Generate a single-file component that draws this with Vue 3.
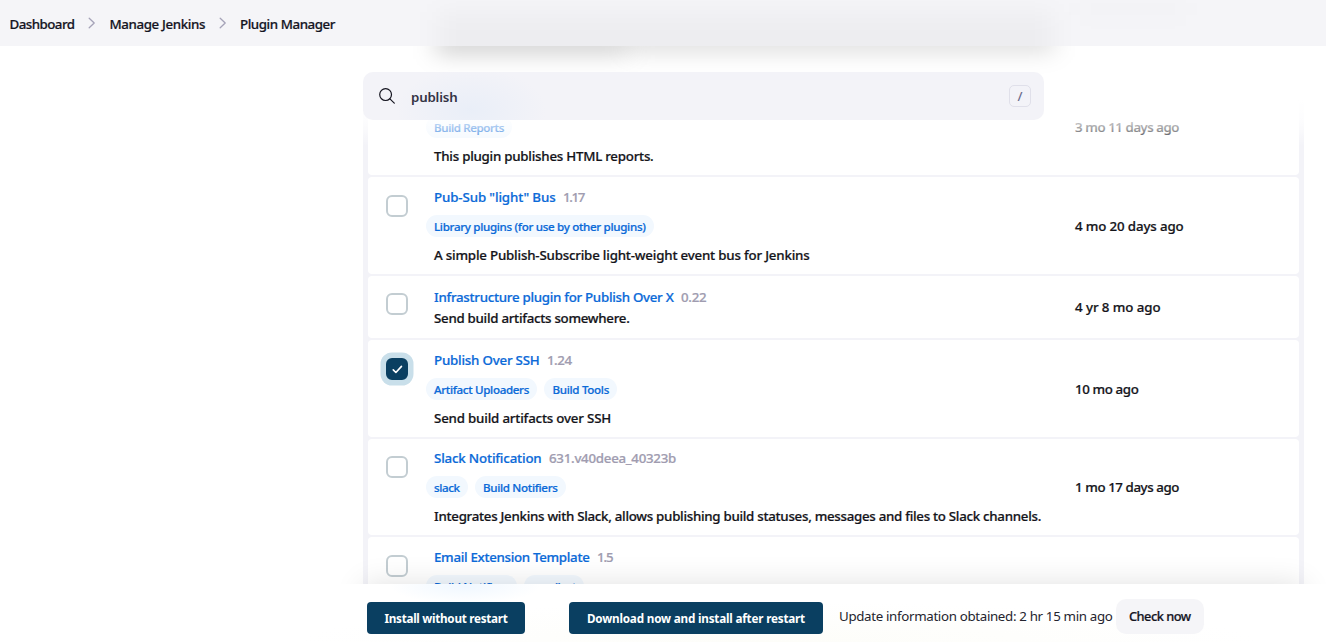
<script setup>
import { ref } from 'vue'

// Tracks a label so that it fills the given width in pixels.
const vFit = {
  mounted(el, { value }) {
    const natural = el.getBoundingClientRect().width
    const n = el.textContent.length
    el.style.letterSpacing = ((value - natural) / n).toFixed(3) + 'px'
  },
}

const crumbs = [
  { text: 'Dashboard', w: 65 },
  { text: 'Manage Jenkins', w: 95.5 },
  { text: 'Plugin Manager', w: 95 },
]

const plugins = ref([
  {
    name: 'Pub-Sub "light" Bus', nw: 121.5, version: '1.17', vw: 21,
    tags: [{ text: 'Library plugins (for use by other plugins)', w: 211.5 }],
    desc: 'A simple Publish-Subscribe light-weight event bus for Jenkins', dw: 375.5,
    date: '4 mo 20 days ago', aw: 108.5, checked: false, kind: 'regular',
  },
  {
    name: 'Infrastructure plugin for Publish Over X', nw: 239.5, version: '0.22', vw: 25.5,
    tags: [],
    desc: 'Send build artifacts somewhere.', dw: 195.5,
    date: '4 yr 8 mo ago', aw: 85.5, checked: false, kind: 'compact',
  },
  {
    name: 'Publish Over SSH', nw: 105.5, version: '1.24', vw: 24.5,
    tags: [{ text: 'Artifact Uploaders', w: 95 }, { text: 'Build Tools', w: 56.5 }],
    desc: 'Send build artifacts over SSH', dw: 177,
    date: '10 mo ago', aw: 63.5, checked: true, kind: 'regular',
  },
  {
    name: 'Slack Notification', nw: 107.5, version: '631.v40deea_40323b', vw: 127,
    tags: [{ text: 'slack', w: 25.5 }, { text: 'Build Notifiers', w: 74.5 }],
    desc: 'Integrates Jenkins with Slack, allows publishing build statuses, messages and files to Slack channels.', dw: 607,
    date: '1 mo 17 days ago', aw: 104, checked: false, kind: 'tight',
  },
  {
    name: 'Email Extension Template', nw: 155.5, version: '1.5', vw: 15.5,
    tags: [{ text: 'Build Notifiers', w: 74.5 }, { text: 'emailext', w: 44 }],
    desc: '', dw: 0, date: '', aw: 0, checked: false, kind: 'regular',
  },
])
</script>

<template>
  <div class="page">
    <header class="crumbs">
      <i class="ghost g1"></i><i class="ghost g4"></i>
      <template v-for="(c, i) in crumbs" :key="c.text">
        <svg v-if="i" class="chev" viewBox="0 0 8 12"><path d="M1.2 1.2 6.2 6 1.2 10.8" /></svg>
        <a class="crumb"><span v-fit="c.w" class="t">{{ c.text }}</span></a>
      </template>
    </header>

    <main class="main">
      <div class="ghosts">
        <i class="ghost g2"></i><i class="ghost g3"></i>
      </div>

      <div class="search">
        <svg class="glass" viewBox="0 0 16 16"><circle cx="6.6" cy="6.6" r="5.9" /><path d="m10.9 10.9 4.4 4.2" /></svg>
        <span v-fit="46.5" class="t query">publish</span>
        <kbd class="key">/</kbd>
      </div>

      <section class="table">
        <div class="row first">
          <div class="check"></div>
          <div class="info">
            <div class="tags"><span class="tag"><span v-fit="70" class="t">Build Reports</span></span></div>
            <div class="desc"><span v-fit="219.5" class="t">This plugin publishes HTML reports.</span></div>
          </div>
          <div class="date"><span v-fit="104" class="t">3 mo 11 days ago</span></div>
        </div>

        <div v-for="p in plugins" :key="p.name" class="row" :class="p.kind">
          <div class="check">
            <span class="box" :class="{ on: p.checked }">
              <svg v-if="p.checked" class="tick" viewBox="0 0 12 10"><path d="M1.3 5.4 4.2 8.3 10.4 1.5" /></svg>
            </span>
          </div>
          <div class="info">
            <div class="title">
              <a v-fit="p.nw" class="t name">{{ p.name }}</a>
              <span v-fit="p.vw" class="t version">{{ p.version }}</span>
            </div>
            <div v-if="p.tags.length" class="tags">
              <span v-for="g in p.tags" :key="g.text" class="tag"><span v-fit="g.w" class="t">{{ g.text }}</span></span>
            </div>
            <div v-if="p.desc" class="desc"><span v-fit="p.dw" class="t">{{ p.desc }}</span></div>
          </div>
          <div class="date"><span v-if="p.date" v-fit="p.aw" class="t">{{ p.date }}</span></div>
        </div>
        <div class="fade"></div>
      </section>
    </main>

    <div class="shade"></div>
    <footer class="bar">
      <button class="btn primary one"><span v-fit="123" class="t">Install without restart</span></button>
      <button class="btn primary two"><span v-fit="218" class="t">Download now and install after restart</span></button>
      <span class="updated"><span v-fit="273.5" class="t">Update information obtained: 2 hr 15 min ago</span></span>
      <button class="btn again"><span v-fit="61.5" class="t">Check now</span></button>
    </footer>
  </div>
</template>

<style>
body { background: #fff; }
</style>

<style scoped>
.page {
  position: relative;
  width: 1326px;
  height: 642px;
  overflow: hidden;
  background: #fff;
  font-family: "Noto Sans", "Open Sans", sans-serif;
  font-size: 13.3px;
  font-weight: 500;
  line-height: 20px;
  color: #14141f;
}
.t { display: inline-block; white-space: nowrap; -webkit-text-stroke: 0.22px currentColor; }
.query, .bar .primary .t, .updated .t { -webkit-text-stroke: 0; }

.crumbs {
  position: relative;
  z-index: 1;
  display: flex;
  align-items: center;
  height: 46px;
  padding: 2px 9.5px 0;
  box-sizing: border-box;
  overflow: hidden;
  background: #f5f5f8;
}
.crumb { line-height: 20px; }
.chev { width: 8px; height: 12px; margin: -3px 13.3px 0 13.7px; fill: none; stroke: #a5a3b8; stroke-width: 1.3; stroke-linecap: round; stroke-linejoin: round; }

.main { position: relative; padding: 26px 22px 0 363px; }

.ghosts { position: absolute; left: 0; top: 0; width: 1326px; height: 70px; overflow: hidden; pointer-events: none; }
.ghost { position: absolute; filter: blur(12px); }
.g1 { left: 438px; top: 12px; width: 615px; height: 60px; background: rgba(0, 0, 0, 0.03); }
.g2 { left: 436px; top: -12px; width: 192px; height: 17px; background: rgba(0, 0, 0, 0.25); }
.g3 { left: 630px; top: -14px; width: 424px; height: 17px; background: rgba(0, 0, 0, 0.18); }
.g4 { left: 1080px; top: 0; width: 106px; height: 18px; background: rgba(0, 0, 0, 0.012); }

.search {
  position: relative;
  z-index: 3;
  display: flex;
  align-items: center;
  width: 681px;
  height: 48px;
  box-sizing: border-box;
  padding: 0 13px 0 16px;
  border-radius: 10px;
  background:
    radial-gradient(ellipse 75px 42px at 108px 38px, rgba(220, 232, 248, 0.42), rgba(220, 232, 248, 0)),
    #f3f3f8;
}
.glass { width: 16px; height: 16px; margin-right: 16px; fill: none; stroke: #14141f; stroke-width: 1.2; stroke-linecap: round; }
.query { font-weight: 600; color: #333344; margin-top: 1px; }
.key {
  width: 22px;
  height: 22px;
  box-sizing: border-box;
  margin-left: auto;
  border: 1px solid #e0e0ea;
  border-radius: 5px;
  font: 500 13px/20px "Noto Sans", sans-serif;
  text-align: center;
  color: #6b6b8c;
}

.table {
  position: relative;
  display: flex;
  flex-direction: column;
  gap: 2px;
  margin-top: -20px;
  padding: 0 5px;
  background: #f3f3f8;
}
.row {
  display: flex;
  box-sizing: border-box;
  height: 97px;
  padding-top: 10px;
  border-radius: 4px;
  background: #fff;
}
.row.compact { height: 62px; padding-top: 11px; }
.row.tight { height: 96px; padding-top: 9px; }
.row.first { height: 75px; padding-top: 16px; }
.check { width: 66px; box-sizing: border-box; padding: 8px 0 0 18px; flex: none; }
.compact .check { padding-top: 6px; }
.info { width: 641px; flex: none; display: flex; flex-direction: column; gap: 8px; }
.compact .info { gap: 1px; }
.title { display: flex; gap: 7.5px; height: 20px; }
.name { color: #0b6ad8; }
.version { color: #a09cb0; }
.tags { display: flex; gap: 7.5px; margin-left: -8px; }
.tag { height: 22px; padding: 0 8px; border-radius: 11px; background: #f2f8fe; color: #0b6ad8; font-size: 11.6px; line-height: 24px; }
.desc { color: #14141a; height: 20px; }
.date { flex: 1; align-self: center; margin-top: -9px; color: #14141a; height: 20px; }
.compact .date { margin-top: -12px; }
.first .date { align-self: flex-start; margin-top: 1px; }

.box {
  display: flex;
  align-items: center;
  justify-content: center;
  width: 22px;
  height: 22px;
  box-sizing: border-box;
  border: 2px solid #c3cdd2;
  border-radius: 6px;
  background: #fff;
}
.box.on { border-color: #0a3f61; background: #0a3f61; box-shadow: 0 0 0 5.5px #c9dfea; }
.tick { width: 11px; height: 9px; flex: none; fill: none; stroke: #fff; stroke-width: 1.8; stroke-linecap: round; stroke-linejoin: round; }

.fade {
  position: absolute;
  left: 0;
  right: 0;
  top: 0;
  height: 46px;
  background: linear-gradient(#fff 0, rgba(255, 255, 255, 0.8) 20px, rgba(255, 255, 255, 0.55) 30px, rgba(255, 255, 255, 0) 46px);
}

.shade {
  position: absolute;
  left: 363px;
  top: 584px;
  width: 941px;
  height: 58px;
  box-shadow: 0 0 30px rgba(0, 0, 0, 0.12);
}
.bar {
  position: absolute;
  left: 0;
  right: 0;
  bottom: 0;
  display: flex;
  height: 58px;
  box-sizing: border-box;
  padding-left: 367px;
  background:
    radial-gradient(ellipse 75px 18px at 465px 2px, rgba(225, 240, 255, 0.5), rgba(225, 240, 255, 0)),
    radial-gradient(ellipse 480px 40px at 780px 58px, #fdfdf9, rgba(255, 255, 255, 0)),
    #fff;
}
.btn { border: 0; padding: 0; font-family: inherit; text-align: center; }
.primary { height: 32px; margin-top: 18px; border-radius: 4px; background: #0a3f61; color: #fff; font-size: 11.7px; font-weight: 700; line-height: 33px; }
.one { width: 158px; }
.two { width: 254px; margin-left: 44px; }
.updated { margin: 22px 3.5px 0 16px; font-weight: 400; color: #24242e; }
.again { width: 87.5px; height: 35px; margin-top: 14.5px; border-radius: 10px; background: #f5f5f8; font-size: 12.8px; font-weight: 500; line-height: 35px; color: #14141f; }
</style>
